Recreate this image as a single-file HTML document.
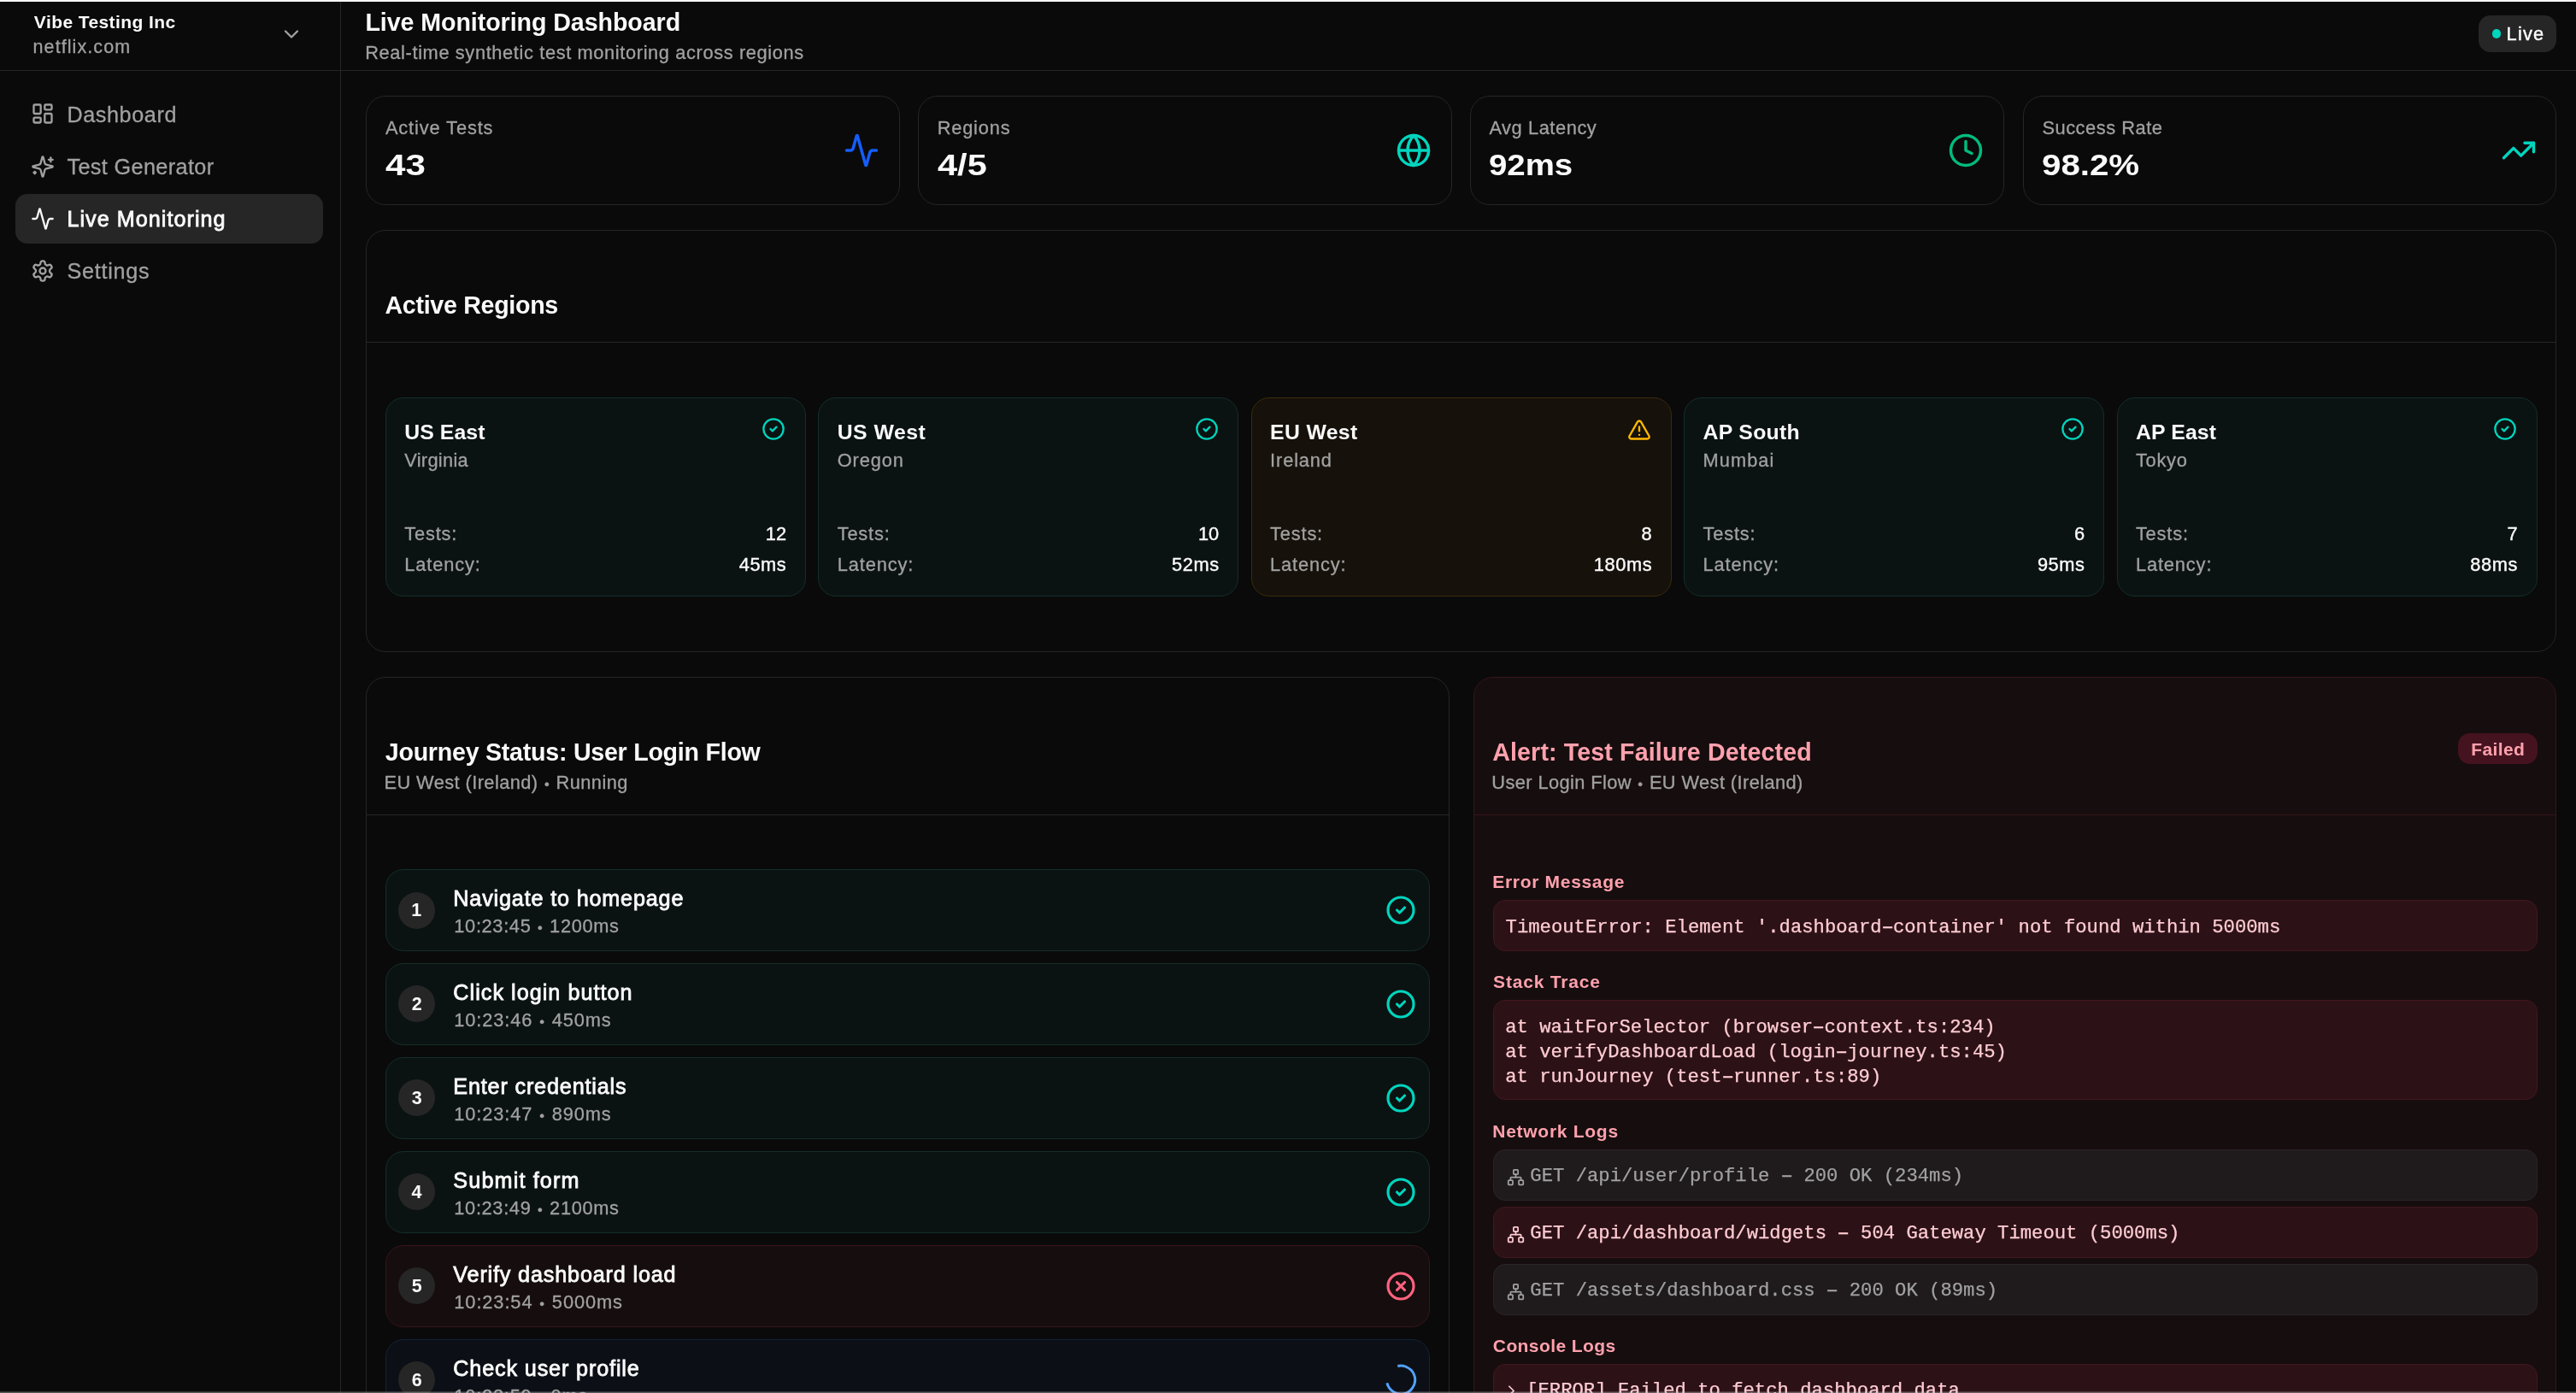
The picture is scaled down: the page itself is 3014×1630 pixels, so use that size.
<!DOCTYPE html>
<html lang="en"><head><meta charset="utf-8"><title>Live Monitoring Dashboard</title><style>
html,body{margin:0;padding:0}
body{width:3014px;height:1630px;overflow:hidden;position:relative;background:#0a0a0a;font-family:"Liberation Sans",sans-serif;-webkit-font-smoothing:antialiased}
.app{position:absolute;left:0;top:0;width:3014px;height:1630px;overflow:hidden;will-change:transform}
.b{position:absolute;box-sizing:border-box}
.t{position:absolute;white-space:nowrap;line-height:1;display:block}
.r{font-family:"Liberation Sans",sans-serif;font-weight:400}
.bd{font-family:"Liberation Sans",sans-serif;font-weight:700}
.mono{font-family:"Liberation Mono",monospace;font-weight:400}
.hy{display:inline-block;transform:scaleX(1.75)}
.bu{font-size:.75em;position:relative;top:-.03em}
.ic{position:absolute;display:block;overflow:visible}
</style></head>
<body>
<div class="app">
<!-- sidebar -->
<div class="b " style="left:398px;top:0px;width:1px;height:1630px;background:#262626;"></div>
<div class="b " style="left:0px;top:82px;width:3014px;height:1px;background:#262626;"></div>
<span class="t bd " style="left:39.86px;top:15px;font-size:21px;color:#fafafa;letter-spacing:0.411px;">Vibe Testing Inc</span>
<span class="t r " style="left:38.57px;top:45px;font-size:21.5px;color:#a1a1a1;letter-spacing:1.079px;-webkit-text-stroke:0.3px #a1a1a1;">netflix.com</span>
<svg class="ic" style="left:326.50px;top:25.70px" width="28" height="28" viewBox="0 0 24 24" fill="none" stroke="#a1a1a1" stroke-width="2" stroke-linecap="round" stroke-linejoin="round"><path d="m6 9 6 6 6-6"/></svg>
<div class="b " style="left:18px;top:226.5px;width:359.5px;height:58.5px;background:#262626;border-radius:14px;"></div>
<svg class="ic" style="left:36.20px;top:119.40px" width="28" height="28" viewBox="0 0 24 24" fill="none" stroke="#a1a1a1" stroke-width="2" stroke-linecap="round" stroke-linejoin="round"><rect x="3" y="3" width="7" height="9" rx="1"/><rect x="14" y="3" width="7" height="5" rx="1"/><rect x="14" y="12" width="7" height="9" rx="1"/><rect x="3" y="16" width="7" height="5" rx="1"/></svg>
<span class="t r " style="left:78.40px;top:122px;font-size:25.2px;color:#a1a1a1;letter-spacing:0.601px;-webkit-text-stroke:0.3px #a1a1a1;">Dashboard</span>
<svg class="ic" style="left:36.20px;top:180.70px" width="28" height="28" viewBox="0 0 24 24" fill="none" stroke="#a1a1a1" stroke-width="2" stroke-linecap="round" stroke-linejoin="round"><path d="M9.937 15.5A2 2 0 0 0 8.5 14.063l-6.135-1.582a.5.5 0 0 1 0-.962L8.5 9.936A2 2 0 0 0 9.937 8.5l1.582-6.135a.5.5 0 0 1 .963 0L14.063 8.5A2 2 0 0 0 15.5 9.937l6.135 1.581a.5.5 0 0 1 0 .964L15.5 14.063a2 2 0 0 0-1.437 1.437l-1.582 6.135a.5.5 0 0 1-.963 0z"/><path d="M20 3v4"/><path d="M22 5h-4"/><path d="M4 17v2"/><path d="M5 18H3"/></svg>
<span class="t r " style="left:78.40px;top:183px;font-size:25.2px;color:#a1a1a1;letter-spacing:0.393px;-webkit-text-stroke:0.3px #a1a1a1;">Test Generator</span>
<svg class="ic" style="left:36.20px;top:242.00px" width="28" height="28" viewBox="0 0 24 24" fill="none" stroke="#fafafa" stroke-width="2" stroke-linecap="round" stroke-linejoin="round"><path d="M22 12h-2.48a2 2 0 0 0-1.93 1.46l-2.35 8.36a.25.25 0 0 1-.48 0L9.24 2.18a.25.25 0 0 0-.48 0l-2.35 8.36A2 2 0 0 1 4.49 12H2"/></svg>
<span class="t r " style="left:78.40px;top:244px;font-size:25.2px;color:#fafafa;letter-spacing:1.029px;-webkit-text-stroke:0.8px #fafafa;">Live Monitoring</span>
<svg class="ic" style="left:36.20px;top:303.20px" width="28" height="28" viewBox="0 0 24 24" fill="none" stroke="#a1a1a1" stroke-width="2" stroke-linecap="round" stroke-linejoin="round"><path d="M12.22 2h-.44a2 2 0 0 0-2 2v.18a2 2 0 0 1-1 1.73l-.43.25a2 2 0 0 1-2 0l-.15-.08a2 2 0 0 0-2.73.73l-.22.38a2 2 0 0 0 .73 2.73l.15.1a2 2 0 0 1 1 1.72v.51a2 2 0 0 1-1 1.74l-.15.09a2 2 0 0 0-.73 2.73l.22.38a2 2 0 0 0 2.73.73l.15-.08a2 2 0 0 1 2 0l.43.25a2 2 0 0 1 1 1.73V20a2 2 0 0 0 2 2h.44a2 2 0 0 0 2-2v-.18a2 2 0 0 1 1-1.73l.43-.25a2 2 0 0 1 2 0l.15.08a2 2 0 0 0 2.73-.73l.22-.39a2 2 0 0 0-.73-2.73l-.15-.08a2 2 0 0 1-1-1.74v-.5a2 2 0 0 1 1-1.74l.15-.09a2 2 0 0 0 .73-2.73l-.22-.38a2 2 0 0 0-2.73-.73l-.15.08a2 2 0 0 1-2 0l-.43-.25a2 2 0 0 1-1-1.73V4a2 2 0 0 0-2-2z"/><circle cx="12" cy="12" r="3"/></svg>
<span class="t r " style="left:78.40px;top:305px;font-size:25.2px;color:#a1a1a1;letter-spacing:0.743px;-webkit-text-stroke:0.3px #a1a1a1;">Settings</span>
<!-- header -->
<span class="t bd " style="left:427.39px;top:12px;font-size:28.6px;color:#fafafa;letter-spacing:-0.059px;">Live Monitoring Dashboard</span>
<span class="t r " style="left:427.21px;top:51px;font-size:21.8px;color:#a1a1a1;letter-spacing:0.630px;-webkit-text-stroke:0.3px #a1a1a1;">Real-time synthetic test monitoring across regions</span>
<div class="b " style="left:2899.5px;top:17.5px;width:91.5px;height:43.5px;background:#262626;border-radius:14px;"></div>
<div class="b " style="left:2915.6px;top:34px;width:10.8px;height:10.8px;background:#00d5be;border-radius:6px;"></div>
<span class="t r " style="left:2932.61px;top:29px;font-size:21.8px;color:#fafafa;letter-spacing:1.188px;-webkit-text-stroke:0.44px #fafafa;">Live</span>
<!-- stats -->
<div class="b bb" style="left:428px;top:112px;width:625px;height:128px;border:1px solid #262626;border-radius:23px;"></div>
<span class="t r " style="left:450.90px;top:139px;font-size:21.8px;color:#a1a1a1;letter-spacing:0.884px;-webkit-text-stroke:0.3px #a1a1a1;">Active Tests</span>
<span class="t bd " style="left:450.90px;top:176px;font-size:35.5px;color:#fafafa;transform:scaleX(1.1867);transform-origin:0 50%;">43</span>
<svg class="ic" style="left:987.20px;top:155.30px" width="42" height="42" viewBox="0 0 24 24" fill="none" stroke="#155dfc" stroke-width="2" stroke-linecap="round" stroke-linejoin="round"><path d="M22 12h-2.48a2 2 0 0 0-1.93 1.46l-2.35 8.36a.25.25 0 0 1-.48 0L9.24 2.18a.25.25 0 0 0-.48 0l-2.35 8.36A2 2 0 0 1 4.49 12H2"/></svg>
<div class="b bb" style="left:1074px;top:112px;width:625px;height:128px;border:1px solid #262626;border-radius:23px;"></div>
<span class="t r " style="left:1096.70px;top:139px;font-size:21.8px;color:#a1a1a1;letter-spacing:0.815px;-webkit-text-stroke:0.3px #a1a1a1;">Regions</span>
<span class="t bd " style="left:1096.70px;top:176px;font-size:35.5px;color:#fafafa;transform:scaleX(1.1709);transform-origin:0 50%;">4/5</span>
<svg class="ic" style="left:1633.20px;top:155.30px" width="42" height="42" viewBox="0 0 24 24" fill="none" stroke="#00d5be" stroke-width="2" stroke-linecap="round" stroke-linejoin="round"><circle cx="12" cy="12" r="10"/><path d="M12 2a14.5 14.5 0 0 0 0 20 14.5 14.5 0 0 0 0-20"/><path d="M2 12h20"/></svg>
<div class="b bb" style="left:1720px;top:112px;width:625px;height:128px;border:1px solid #262626;border-radius:23px;"></div>
<span class="t r " style="left:1742.40px;top:139px;font-size:21.8px;color:#a1a1a1;letter-spacing:0.580px;-webkit-text-stroke:0.3px #a1a1a1;">Avg Latency</span>
<span class="t bd " style="left:1742.40px;top:176px;font-size:35.5px;color:#fafafa;transform:scaleX(1.0816);transform-origin:0 50%;">92ms</span>
<svg class="ic" style="left:2279.20px;top:155.30px" width="42" height="42" viewBox="0 0 24 24" fill="none" stroke="#00bc7d" stroke-width="2" stroke-linecap="round" stroke-linejoin="round"><circle cx="12" cy="12" r="10"/><polyline points="12 6 12 12 16 14"/></svg>
<div class="b bb" style="left:2367px;top:112px;width:624px;height:128px;border:1px solid #262626;border-radius:23px;"></div>
<span class="t r " style="left:2389.40px;top:139px;font-size:21.8px;color:#a1a1a1;letter-spacing:0.551px;-webkit-text-stroke:0.3px #a1a1a1;">Success Rate</span>
<span class="t bd " style="left:2389.40px;top:176px;font-size:35.5px;color:#fafafa;transform:scaleX(1.1341);transform-origin:0 50%;">98.2%</span>
<svg class="ic" style="left:2926.20px;top:155.30px" width="42" height="42" viewBox="0 0 24 24" fill="none" stroke="#00d5be" stroke-width="2" stroke-linecap="round" stroke-linejoin="round"><polyline points="22 7 13.5 15.5 8.5 10.5 2 17"/><polyline points="16 7 22 7 22 13"/></svg>
<!-- regions -->
<div class="b bb" style="left:428px;top:269px;width:2563px;height:494px;border:1px solid #262626;border-radius:23px;"></div>
<div class="b " style="left:429px;top:400px;width:2561px;height:1px;background:#262626;"></div>
<span class="t bd " style="left:450.49px;top:343px;font-size:28.6px;color:#fafafa;letter-spacing:-0.294px;">Active Regions</span>
<div class="b bb" style="left:451.0px;top:465px;width:492px;height:233px;background:#0b1312;border:1px solid #132e2a;border-radius:21px;"></div>
<span class="t bd " style="left:473.30px;top:494px;font-size:24.8px;color:#fafafa;letter-spacing:0.077px;">US East</span>
<span class="t r " style="left:473.30px;top:528px;font-size:21.8px;color:#a1a1a1;letter-spacing:0.291px;-webkit-text-stroke:0.3px #a1a1a1;">Virginia</span>
<span class="t r " style="left:473.30px;top:614px;font-size:21.8px;color:#a1a1a1;letter-spacing:0.829px;-webkit-text-stroke:0.3px #a1a1a1;">Tests:</span>
<span class="t r " style="left:473.30px;top:650px;font-size:21.8px;color:#a1a1a1;letter-spacing:0.881px;-webkit-text-stroke:0.3px #a1a1a1;">Latency:</span>
<span class="t r " style="left:895.85px;top:614px;font-size:21.8px;color:#fafafa;-webkit-text-stroke:0.4px #fafafa;">12</span>
<span class="t r " style="left:864.68px;top:650px;font-size:21.8px;color:#fafafa;letter-spacing:0.600px;-webkit-text-stroke:0.4px #fafafa;">45ms</span>
<svg class="ic" style="left:891.30px;top:488.40px" width="28" height="28" viewBox="0 0 24 24" fill="none" stroke="#00d5be" stroke-width="2" stroke-linecap="round" stroke-linejoin="round"><circle cx="12" cy="12" r="10"/><path d="m9 12 2 2 4-4"/></svg>
<div class="b bb" style="left:957.4px;top:465px;width:492px;height:233px;background:#0b1312;border:1px solid #132e2a;border-radius:21px;"></div>
<span class="t bd " style="left:979.70px;top:494px;font-size:24.8px;color:#fafafa;letter-spacing:0.475px;">US West</span>
<span class="t r " style="left:979.70px;top:528px;font-size:21.8px;color:#a1a1a1;letter-spacing:0.881px;-webkit-text-stroke:0.3px #a1a1a1;">Oregon</span>
<span class="t r " style="left:979.70px;top:614px;font-size:21.8px;color:#a1a1a1;letter-spacing:0.829px;-webkit-text-stroke:0.3px #a1a1a1;">Tests:</span>
<span class="t r " style="left:979.70px;top:650px;font-size:21.8px;color:#a1a1a1;letter-spacing:0.881px;-webkit-text-stroke:0.3px #a1a1a1;">Latency:</span>
<span class="t r " style="left:1402.00px;top:614px;font-size:21.8px;color:#fafafa;-webkit-text-stroke:0.4px #fafafa;">10</span>
<span class="t r " style="left:1371.08px;top:650px;font-size:21.8px;color:#fafafa;letter-spacing:0.600px;-webkit-text-stroke:0.4px #fafafa;">52ms</span>
<svg class="ic" style="left:1397.70px;top:488.40px" width="28" height="28" viewBox="0 0 24 24" fill="none" stroke="#00d5be" stroke-width="2" stroke-linecap="round" stroke-linejoin="round"><circle cx="12" cy="12" r="10"/><path d="m9 12 2 2 4-4"/></svg>
<div class="b bb" style="left:1463.8px;top:465px;width:492px;height:233px;background:#16110a;border:1px solid #3d2b0c;border-radius:21px;"></div>
<span class="t bd " style="left:1486.10px;top:494px;font-size:24.8px;color:#fafafa;letter-spacing:0.323px;">EU West</span>
<span class="t r " style="left:1486.10px;top:528px;font-size:21.8px;color:#a1a1a1;letter-spacing:0.868px;-webkit-text-stroke:0.3px #a1a1a1;">Ireland</span>
<span class="t r " style="left:1486.10px;top:614px;font-size:21.8px;color:#a1a1a1;letter-spacing:0.829px;-webkit-text-stroke:0.3px #a1a1a1;">Tests:</span>
<span class="t r " style="left:1486.10px;top:650px;font-size:21.8px;color:#a1a1a1;letter-spacing:0.881px;-webkit-text-stroke:0.3px #a1a1a1;">Latency:</span>
<span class="t r " style="left:1920.62px;top:614px;font-size:21.8px;color:#fafafa;-webkit-text-stroke:0.4px #fafafa;">8</span>
<span class="t r " style="left:1864.76px;top:650px;font-size:21.8px;color:#fafafa;letter-spacing:0.600px;-webkit-text-stroke:0.4px #fafafa;">180ms</span>
<svg class="ic" style="left:1904.40px;top:489.00px" width="28" height="28" viewBox="0 0 24 24" fill="none" stroke="#ffb900" stroke-width="2" stroke-linecap="round" stroke-linejoin="round"><path d="m21.73 18-8-14a2 2 0 0 0-3.48 0l-8 14A2 2 0 0 0 4 21h16a2 2 0 0 0 1.73-3"/><path d="M12 9v4"/><path d="M12 17h.01"/></svg>
<div class="b bb" style="left:1970.2px;top:465px;width:492px;height:233px;background:#0b1312;border:1px solid #132e2a;border-radius:21px;"></div>
<span class="t bd " style="left:1992.50px;top:494px;font-size:24.8px;color:#fafafa;letter-spacing:0.304px;">AP South</span>
<span class="t r " style="left:1992.50px;top:528px;font-size:21.8px;color:#a1a1a1;letter-spacing:1.068px;-webkit-text-stroke:0.3px #a1a1a1;">Mumbai</span>
<span class="t r " style="left:1992.50px;top:614px;font-size:21.8px;color:#a1a1a1;letter-spacing:0.829px;-webkit-text-stroke:0.3px #a1a1a1;">Tests:</span>
<span class="t r " style="left:1992.50px;top:650px;font-size:21.8px;color:#a1a1a1;letter-spacing:0.881px;-webkit-text-stroke:0.3px #a1a1a1;">Latency:</span>
<span class="t r " style="left:2427.03px;top:614px;font-size:21.8px;color:#fafafa;-webkit-text-stroke:0.4px #fafafa;">6</span>
<span class="t r " style="left:2383.88px;top:650px;font-size:21.8px;color:#fafafa;letter-spacing:0.600px;-webkit-text-stroke:0.4px #fafafa;">95ms</span>
<svg class="ic" style="left:2410.50px;top:488.40px" width="28" height="28" viewBox="0 0 24 24" fill="none" stroke="#00d5be" stroke-width="2" stroke-linecap="round" stroke-linejoin="round"><circle cx="12" cy="12" r="10"/><path d="m9 12 2 2 4-4"/></svg>
<div class="b bb" style="left:2476.6px;top:465px;width:492px;height:233px;background:#0b1312;border:1px solid #132e2a;border-radius:21px;"></div>
<span class="t bd " style="left:2498.90px;top:494px;font-size:24.8px;color:#fafafa;letter-spacing:0.150px;">AP East</span>
<span class="t r " style="left:2498.90px;top:528px;font-size:21.8px;color:#a1a1a1;letter-spacing:0.734px;-webkit-text-stroke:0.3px #a1a1a1;">Tokyo</span>
<span class="t r " style="left:2498.90px;top:614px;font-size:21.8px;color:#a1a1a1;letter-spacing:0.829px;-webkit-text-stroke:0.3px #a1a1a1;">Tests:</span>
<span class="t r " style="left:2498.90px;top:650px;font-size:21.8px;color:#a1a1a1;letter-spacing:0.881px;-webkit-text-stroke:0.3px #a1a1a1;">Latency:</span>
<span class="t r " style="left:2933.57px;top:614px;font-size:21.8px;color:#fafafa;-webkit-text-stroke:0.4px #fafafa;">7</span>
<span class="t r " style="left:2890.28px;top:650px;font-size:21.8px;color:#fafafa;letter-spacing:0.600px;-webkit-text-stroke:0.4px #fafafa;">88ms</span>
<svg class="ic" style="left:2916.90px;top:488.40px" width="28" height="28" viewBox="0 0 24 24" fill="none" stroke="#00d5be" stroke-width="2" stroke-linecap="round" stroke-linejoin="round"><circle cx="12" cy="12" r="10"/><path d="m9 12 2 2 4-4"/></svg>
<!-- journey -->
<div class="b bb" style="left:428px;top:792px;width:1267.5px;height:900px;border:1px solid #262626;border-radius:23px;"></div>
<div class="b " style="left:429px;top:952.5px;width:1265.5px;height:1px;background:#262626;"></div>
<span class="t bd " style="left:450.77px;top:866px;font-size:28.6px;color:#fafafa;letter-spacing:-0.245px;">Journey Status: User Login Flow</span>
<span class="t r " style="left:449.41px;top:905px;font-size:21.8px;color:#a1a1a1;letter-spacing:0.431px;-webkit-text-stroke:0.3px #a1a1a1;">EU West (Ireland) <span class="bu" style="margin:0 0.95px">•</span> Running</span>
<div class="b bb" style="left:451px;top:1017.3px;width:1222px;height:95.5px;background:#0b1312;border:1px solid #132e2a;border-radius:21px;"></div>
<div class="b " style="left:466.1px;top:1043.5px;width:43px;height:43px;background:#262626;border-radius:22px;"></div>
<span class="t bd " style="left:481.34px;top:1055px;font-size:21.5px;color:#fafafa;">1</span>
<span class="t r " style="left:530.30px;top:1039px;font-size:25.2px;color:#fafafa;letter-spacing:0.827px;-webkit-text-stroke:0.8px #fafafa;">Navigate to homepage</span>
<span class="t r " style="left:531.34px;top:1073px;font-size:21.8px;color:#a1a1a1;letter-spacing:0.655px;-webkit-text-stroke:0.3px #a1a1a1;">10:23:45 <span class="bu" style="margin:0 0.95px">•</span> 1200ms</span>
<svg class="ic" style="left:1621.10px;top:1047.00px" width="36" height="36" viewBox="0 0 24 24" fill="none" stroke="#00d5be" stroke-width="2.1" stroke-linecap="round" stroke-linejoin="round"><circle cx="12" cy="12" r="10"/><path d="m9 12 2 2 4-4"/></svg>
<div class="b bb" style="left:451px;top:1127.2px;width:1222px;height:95.5px;background:#0b1312;border:1px solid #132e2a;border-radius:21px;"></div>
<div class="b " style="left:466.1px;top:1153.4px;width:43px;height:43px;background:#262626;border-radius:22px;"></div>
<span class="t bd " style="left:481.78px;top:1165px;font-size:21.5px;color:#fafafa;">2</span>
<span class="t r " style="left:530.30px;top:1149px;font-size:25.2px;color:#fafafa;letter-spacing:1.030px;-webkit-text-stroke:0.8px #fafafa;">Click login button</span>
<span class="t r " style="left:531.34px;top:1183px;font-size:21.8px;color:#a1a1a1;letter-spacing:0.887px;-webkit-text-stroke:0.3px #a1a1a1;">10:23:46 <span class="bu" style="margin:0 0.95px">•</span> 450ms</span>
<svg class="ic" style="left:1621.10px;top:1156.93px" width="36" height="36" viewBox="0 0 24 24" fill="none" stroke="#00d5be" stroke-width="2.1" stroke-linecap="round" stroke-linejoin="round"><circle cx="12" cy="12" r="10"/><path d="m9 12 2 2 4-4"/></svg>
<div class="b bb" style="left:451px;top:1237.2px;width:1222px;height:95.5px;background:#0b1312;border:1px solid #132e2a;border-radius:21px;"></div>
<div class="b " style="left:466.1px;top:1263.4px;width:43px;height:43px;background:#262626;border-radius:22px;"></div>
<span class="t bd " style="left:481.86px;top:1275px;font-size:21.5px;color:#fafafa;">3</span>
<span class="t r " style="left:530.30px;top:1259px;font-size:25.2px;color:#fafafa;letter-spacing:0.830px;-webkit-text-stroke:0.8px #fafafa;">Enter credentials</span>
<span class="t r " style="left:531.34px;top:1293px;font-size:21.8px;color:#a1a1a1;letter-spacing:0.887px;-webkit-text-stroke:0.3px #a1a1a1;">10:23:47 <span class="bu" style="margin:0 0.95px">•</span> 890ms</span>
<svg class="ic" style="left:1621.10px;top:1266.86px" width="36" height="36" viewBox="0 0 24 24" fill="none" stroke="#00d5be" stroke-width="2.1" stroke-linecap="round" stroke-linejoin="round"><circle cx="12" cy="12" r="10"/><path d="m9 12 2 2 4-4"/></svg>
<div class="b bb" style="left:451px;top:1347.1px;width:1222px;height:95.5px;background:#0b1312;border:1px solid #132e2a;border-radius:21px;"></div>
<div class="b " style="left:466.1px;top:1373.3px;width:43px;height:43px;background:#262626;border-radius:22px;"></div>
<span class="t bd " style="left:481.62px;top:1385px;font-size:21.5px;color:#fafafa;">4</span>
<span class="t r " style="left:530.30px;top:1369px;font-size:25.2px;color:#fafafa;letter-spacing:1.137px;-webkit-text-stroke:0.8px #fafafa;">Submit form</span>
<span class="t r " style="left:531.34px;top:1403px;font-size:21.8px;color:#a1a1a1;letter-spacing:0.655px;-webkit-text-stroke:0.3px #a1a1a1;">10:23:49 <span class="bu" style="margin:0 0.95px">•</span> 2100ms</span>
<svg class="ic" style="left:1621.10px;top:1376.79px" width="36" height="36" viewBox="0 0 24 24" fill="none" stroke="#00d5be" stroke-width="2.1" stroke-linecap="round" stroke-linejoin="round"><circle cx="12" cy="12" r="10"/><path d="m9 12 2 2 4-4"/></svg>
<div class="b bb" style="left:451px;top:1457.0px;width:1222px;height:95.5px;background:#160d0e;border:1px solid #39151b;border-radius:21px;"></div>
<div class="b " style="left:466.1px;top:1483.2px;width:43px;height:43px;background:#262626;border-radius:22px;"></div>
<span class="t bd " style="left:481.69px;top:1495px;font-size:21.5px;color:#fafafa;">5</span>
<span class="t r " style="left:530.30px;top:1479px;font-size:25.2px;color:#fafafa;letter-spacing:0.833px;-webkit-text-stroke:0.8px #fafafa;">Verify dashboard load</span>
<span class="t r " style="left:531.34px;top:1513px;font-size:21.8px;color:#a1a1a1;letter-spacing:0.905px;-webkit-text-stroke:0.3px #a1a1a1;">10:23:54 <span class="bu" style="margin:0 0.95px">•</span> 5000ms</span>
<svg class="ic" style="left:1621.10px;top:1486.72px" width="36" height="36" viewBox="0 0 24 24" fill="none" stroke="#ff637e" stroke-width="2.1" stroke-linecap="round" stroke-linejoin="round"><circle cx="12" cy="12" r="10"/><path d="m15 9-6 6"/><path d="m9 9 6 6"/></svg>
<div class="b bb" style="left:451px;top:1567.0px;width:1222px;height:95.5px;background:#0c1016;border:1px solid #142239;border-radius:21px;"></div>
<div class="b " style="left:466.1px;top:1593.2px;width:43px;height:43px;background:#262626;border-radius:22px;"></div>
<span class="t bd " style="left:481.72px;top:1605px;font-size:21.5px;color:#fafafa;">6</span>
<span class="t r " style="left:530.30px;top:1589px;font-size:25.2px;color:#fafafa;letter-spacing:0.853px;-webkit-text-stroke:0.8px #fafafa;">Check user profile</span>
<span class="t r " style="left:531.34px;top:1623px;font-size:21.8px;color:#a1a1a1;letter-spacing:0.789px;-webkit-text-stroke:0.3px #a1a1a1;">10:23:59 <span class="bu" style="margin:0 0.95px">•</span> 0ms</span>
<div class="b" style="left:1621.05px;top:1596.90px;width:35.5px;height:35.5px;box-sizing:border-box;border:3.5px solid #51a2ff;border-top-color:transparent;border-radius:50%;transform:rotate(-58deg)"></div>
<!-- alert -->
<div class="b bb" style="left:1724px;top:792px;width:1267px;height:900px;background:#160d0e;border:1px solid #39151b;border-radius:23px;"></div>
<div class="b " style="left:1725px;top:952.5px;width:1265px;height:1px;background:#39151b;"></div>
<span class="t bd " style="left:1746.19px;top:866px;font-size:28.6px;color:#ffa1ad;letter-spacing:0.141px;">Alert: Test Failure Detected</span>
<span class="t r " style="left:1745.32px;top:905px;font-size:21.8px;color:#a1a1a1;letter-spacing:0.410px;-webkit-text-stroke:0.3px #a1a1a1;">User Login Flow <span class="bu" style="margin:0 0.95px">•</span> EU West (Ireland)</span>
<div class="b " style="left:2876px;top:858px;width:93px;height:36px;background:#45131f;border-radius:14px;"></div>
<span class="t bd " style="left:2891.20px;top:866px;font-size:21px;color:#ffa1ad;letter-spacing:0.381px;">Failed</span>
<span class="t bd " style="left:1746.30px;top:1021px;font-size:21px;color:#ffa1ad;letter-spacing:0.685px;">Error Message</span>
<div class="b bb" style="left:1747px;top:1053px;width:1222px;height:59.5px;background:#2c1216;border:1px solid #42171e;border-radius:14px;"></div>
<span class="t mono " style="left:1761.58px;top:1074px;font-size:22.23px;color:#ffccd3;-webkit-text-stroke:0.25px #ffccd3;">TimeoutError: Element '.dashboard<span class="hy">-</span>container' not found within 5000ms</span>
<span class="t bd " style="left:1747.10px;top:1138px;font-size:21px;color:#ffa1ad;letter-spacing:0.807px;">Stack Trace</span>
<div class="b bb" style="left:1747px;top:1170.4px;width:1222px;height:116.6px;background:#2c1216;border:1px solid #42171e;border-radius:14px;"></div>
<span class="t mono " style="left:1761.21px;top:1191px;font-size:22.23px;color:#ffccd3;-webkit-text-stroke:0.25px #ffccd3;">at waitForSelector (browser<span class="hy">-</span>context.ts:234)</span>
<span class="t mono " style="left:1761.21px;top:1220px;font-size:22.23px;color:#ffccd3;-webkit-text-stroke:0.25px #ffccd3;">at verifyDashboardLoad (login<span class="hy">-</span>journey.ts:45)</span>
<span class="t mono " style="left:1761.21px;top:1249px;font-size:22.23px;color:#ffccd3;-webkit-text-stroke:0.25px #ffccd3;">at runJourney (test<span class="hy">-</span>runner.ts:89)</span>
<span class="t bd " style="left:1746.30px;top:1313px;font-size:21px;color:#ffa1ad;letter-spacing:0.720px;">Network Logs</span>
<div class="b bb" style="left:1747px;top:1345.0px;width:1222px;height:59.5px;background:#1f1a1b;border:1px solid #2a2526;border-radius:14px;"></div>
<svg class="ic" style="left:1762.50px;top:1366.70px" width="21" height="21" viewBox="0 0 24 24" fill="none" stroke="#a1a1a1" stroke-width="2" stroke-linecap="round" stroke-linejoin="round"><rect x="16" y="16" width="6" height="6" rx="1"/><rect x="2" y="16" width="6" height="6" rx="1"/><rect x="9" y="2" width="6" height="6" rx="1"/><path d="M5 16v-3a1 1 0 0 1 1-1h12a1 1 0 0 1 1 1v3"/><path d="M12 12V8"/></svg>
<span class="t mono " style="left:1790.37px;top:1365px;font-size:22.23px;color:#a1a1a1;-webkit-text-stroke:0.25px #a1a1a1;">GET /api/user/profile <span class="hy">-</span> 200 OK (234ms)</span>
<div class="b bb" style="left:1747px;top:1412.1px;width:1222px;height:59.5px;background:#2c1216;border:1px solid #42171e;border-radius:14px;"></div>
<svg class="ic" style="left:1762.50px;top:1433.80px" width="21" height="21" viewBox="0 0 24 24" fill="none" stroke="#ffccd3" stroke-width="2" stroke-linecap="round" stroke-linejoin="round"><rect x="16" y="16" width="6" height="6" rx="1"/><rect x="2" y="16" width="6" height="6" rx="1"/><rect x="9" y="2" width="6" height="6" rx="1"/><path d="M5 16v-3a1 1 0 0 1 1-1h12a1 1 0 0 1 1 1v3"/><path d="M12 12V8"/></svg>
<span class="t mono " style="left:1790.37px;top:1432px;font-size:22.23px;color:#ffccd3;-webkit-text-stroke:0.25px #ffccd3;">GET /api/dashboard/widgets <span class="hy">-</span> 504 Gateway Timeout (5000ms)</span>
<div class="b bb" style="left:1747px;top:1479.2px;width:1222px;height:59.5px;background:#1f1a1b;border:1px solid #2a2526;border-radius:14px;"></div>
<svg class="ic" style="left:1762.50px;top:1500.90px" width="21" height="21" viewBox="0 0 24 24" fill="none" stroke="#a1a1a1" stroke-width="2" stroke-linecap="round" stroke-linejoin="round"><rect x="16" y="16" width="6" height="6" rx="1"/><rect x="2" y="16" width="6" height="6" rx="1"/><rect x="9" y="2" width="6" height="6" rx="1"/><path d="M5 16v-3a1 1 0 0 1 1-1h12a1 1 0 0 1 1 1v3"/><path d="M12 12V8"/></svg>
<span class="t mono " style="left:1790.37px;top:1499px;font-size:22.23px;color:#a1a1a1;-webkit-text-stroke:0.25px #a1a1a1;">GET /assets/dashboard.css <span class="hy">-</span> 200 OK (89ms)</span>
<span class="t bd " style="left:1746.84px;top:1564px;font-size:21px;color:#ffa1ad;letter-spacing:0.399px;">Console Logs</span>
<div class="b bb" style="left:1747px;top:1595.8px;width:1222px;height:60px;background:#2c1216;border:1px solid #42171e;border-radius:14px;"></div>
<svg class="ic" style="left:1757.50px;top:1617.00px" width="21" height="21" viewBox="0 0 24 24" fill="none" stroke="#ffccd3" stroke-width="2" stroke-linecap="round" stroke-linejoin="round"><path d="m9 18 6-6-6-6"/></svg>
<span class="t mono " style="left:1786.15px;top:1616px;font-size:22.23px;color:#ffccd3;-webkit-text-stroke:0.25px #ffccd3;">[ERROR] Failed to fetch dashboard data</span>
<div class="b " style="left:0px;top:0px;width:3014px;height:2px;background:#ffffff;"></div>
<div class="b " style="left:0px;top:1628px;width:3014px;height:1px;background:rgba(200,200,200,0.2);"></div>
<div class="b " style="left:0px;top:1629px;width:3014px;height:1px;background:rgba(200,200,200,0.42);"></div>
</div>
</body></html>
